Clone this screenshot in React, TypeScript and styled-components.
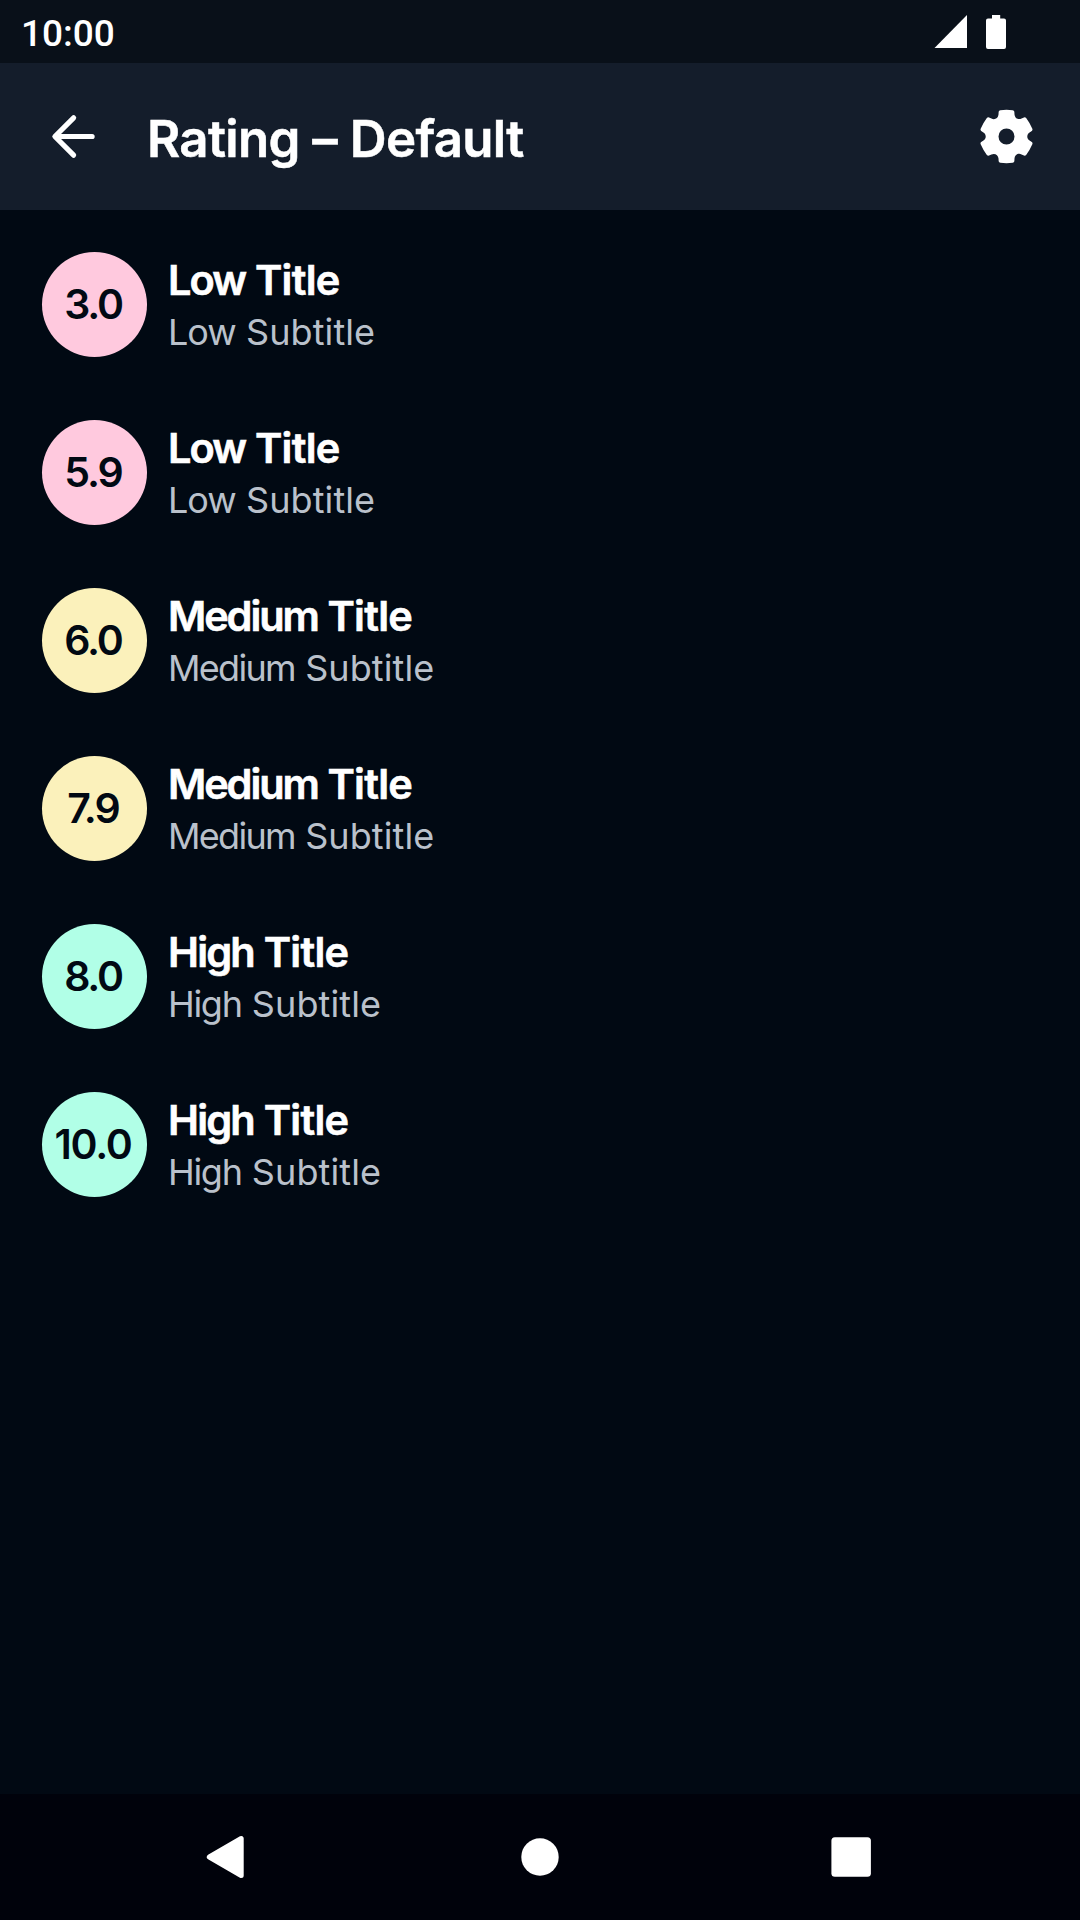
import React from 'react';
import styled, { createGlobalStyle } from 'styled-components';

const GlobalStyle = createGlobalStyle`
  * { box-sizing: border-box; }
  body { margin: 0; background: #010913; }
`;

const Screen = styled.div`
  display: flex;
  flex-direction: column;
  width: 1080px;
  height: 1920px;
  background: #010913;
  color: #ffffff;
  font-family: Inter, 'Liberation Sans', sans-serif;
`;

const StatusBar = styled.div`
  display: flex;
  align-items: center;
  justify-content: space-between;
  height: 63px;
  padding: 0 74px 0 21px;
  background: #091019;
`;

const Clock = styled.span`
  padding-top: 4px;
  font: 500 37px/44px Roboto, sans-serif;
`;

const StatusIcons = styled.div`
  display: flex;
  gap: 19px;
  svg { display: block; }
`;

const AppBar = styled.header`
  display: flex;
  align-items: center;
  height: 147px;
  padding: 0 42px;
  background: #141d2b;
  svg { display: block; flex: none; }
`;

const AppTitle = styled.h1`
  flex: 1;
  margin: 0;
  padding: 5px 0 0 42px;
  font-size: 51px;
  font-weight: 600;
  line-height: 66px;
  letter-spacing: -0.65px;
  word-spacing: 0.3px;
  -webkit-text-stroke: 0.5px currentColor;
`;

const List = styled.main`
  display: flex;
  flex: 1;
  flex-direction: column;
  gap: 63px;
  padding: 42px;
`;

const Row = styled.section`
  display: flex;
  align-items: center;
  gap: 21px;
  height: 105px;
`;

const Score = styled.div<{ $color: string; $spacing: number }>`
  display: flex;
  align-items: center;
  justify-content: center;
  width: 105px;
  height: 105px;
  padding: 0 3px 2px 0;
  border-radius: 50%;
  background: ${(p) => p.$color};
  color: #010913;
  font-size: 41px;
  font-weight: 600;
  letter-spacing: ${(p) => p.$spacing}px;
`;

const Labels = styled.div`
  display: flex;
  flex-direction: column;
  padding-top: 2px;
`;

const Title = styled.div`
  font-size: 41.5px;
  font-weight: 600;
  line-height: 53px;
  letter-spacing: -0.75px;
  -webkit-text-stroke: 0.6px currentColor;
`;

const Subtitle = styled.div`
  color: #bac1cb;
  font-size: 36px;
  font-weight: 400;
  line-height: 50px;
  letter-spacing: 0.1px;
`;

const Level = styled.span<{ $spacing: number }>`
  letter-spacing: ${(p) => p.$spacing}px;
`;

const NavBar = styled.nav`
  display: flex;
  align-items: center;
  justify-content: space-around;
  height: 126px;
  padding: 0 71px;
  background: #00020b;
  svg { display: block; }
`;

const SignalIcon = () => (
  <svg width="33" height="34" viewBox="0 0 33 34" fill="#fff">
    <path d="M0.5 33H33V0Z" />
  </svg>
);

const BatteryIcon = () => (
  <svg width="20" height="34" viewBox="0 0 20 34" fill="#fff">
    <path d="M6 0H14.2V3.5H18Q20 3.5 20 5.5V32Q20 34 18 34H2Q0 34 0 32V5.5Q0 3.5 2 3.5H6Z" />
  </svg>
);

const BackIcon = () => (
  <svg width="63" height="63" viewBox="0 0 63 63" fill="none" stroke="#fff" strokeWidth="5.2" strokeLinecap="round" strokeLinejoin="round">
    <path d="M31.6 12.8L12.9 31.5L31.6 50.2M14 31.5H50.1" />
  </svg>
);

const TOOTH: [string, number[]][] = [
  ['L', [-23.5, -74]],
  ['Q', [-23, -78, -18.5, -78.8]],
  ['Q', [0, -81, 18.5, -78.8]],
  ['Q', [23, -78, 23.5, -74]],
  ['L', [24, -66]],
  ['C', [24.8, -55, 35.2, -49, 45.2, -53.8]],
];

const rotate = (pts: number[], deg: number) => {
  const a = (deg * Math.PI) / 180;
  const out: string[] = [];
  for (let i = 0; i < pts.length; i += 2) {
    const [x, y] = [pts[i], pts[i + 1]];
    out.push((x * Math.cos(a) - y * Math.sin(a)).toFixed(2), (x * Math.sin(a) + y * Math.cos(a)).toFixed(2));
  }
  return out.join(' ');
};

const gearPath =
  'M-24 -66' +
  [0, 60, 120, 180, 240, 300].map((deg) => TOOTH.map(([c, pts]) => c + rotate(pts, deg)).join('')).join('') +
  'ZM-24 0A24 24 0 1 0 24 0A24 24 0 1 0 -24 0Z';

const GearIcon = () => (
  <svg width="63" height="63" viewBox="-94.5 -94.5 189 189" fill="#fff">
    <path fillRule="evenodd" d={gearPath} />
  </svg>
);

const NavBackIcon = () => (
  <svg width="60" height="60" viewBox="0 0 60 60" fill="#fff" stroke="#fff" strokeWidth="5" strokeLinejoin="round">
    <path d="M12.3 30L44.2 11.5V48.5Z" />
  </svg>
);

const NavHomeIcon = () => (
  <svg width="60" height="60" viewBox="0 0 60 60" fill="#fff">
    <circle cx="30" cy="30" r="18.7" />
  </svg>
);

const NavRecentIcon = () => (
  <svg width="60" height="60" viewBox="0 0 60 60" fill="#fff">
    <rect x="8.4" y="10.2" width="39.5" height="39.5" rx="3.5" />
  </svg>
);

const PINK = '#ffc9de';
const YELLOW = '#fbf1bb';
const GREEN = '#b1ffe7';

const LEVELS = {
  Low: { color: PINK, title: -1.9, subtitle: -1 },
  Medium: { color: YELLOW, title: -2.1, subtitle: -1.7 },
  High: { color: GREEN, title: -1.8, subtitle: -1.3 },
};

const ratings: { score: string; level: keyof typeof LEVELS; spacing: number }[] = [
  { score: '3.0', level: 'Low', spacing: -2.2 },
  { score: '5.9', level: 'Low', spacing: -2 },
  { score: '6.0', level: 'Medium', spacing: -2.1 },
  { score: '7.9', level: 'Medium', spacing: -2 },
  { score: '8.0', level: 'High', spacing: -2.2 },
  { score: '10.0', level: 'High', spacing: -1.3 },
];

export default function App() {
  return (
    <>
      <GlobalStyle />
      <Screen>
        <StatusBar>
          <Clock>10:00</Clock>
          <StatusIcons>
            <SignalIcon />
            <BatteryIcon />
          </StatusIcons>
        </StatusBar>
        <AppBar>
          <BackIcon />
          <AppTitle>Rating – Default</AppTitle>
          <GearIcon />
        </AppBar>
        <List>
          {ratings.map(({ score, level, spacing }) => (
            <Row key={score}>
              <Score $color={LEVELS[level].color} $spacing={spacing}>{score}</Score>
              <Labels>
                <Title><Level $spacing={LEVELS[level].title}>{level}</Level> Title</Title>
                <Subtitle><Level $spacing={LEVELS[level].subtitle}>{level}</Level> Subtitle</Subtitle>
              </Labels>
            </Row>
          ))}
        </List>
        <NavBar>
          <NavBackIcon />
          <NavHomeIcon />
          <NavRecentIcon />
        </NavBar>
      </Screen>
    </>
  );
}
